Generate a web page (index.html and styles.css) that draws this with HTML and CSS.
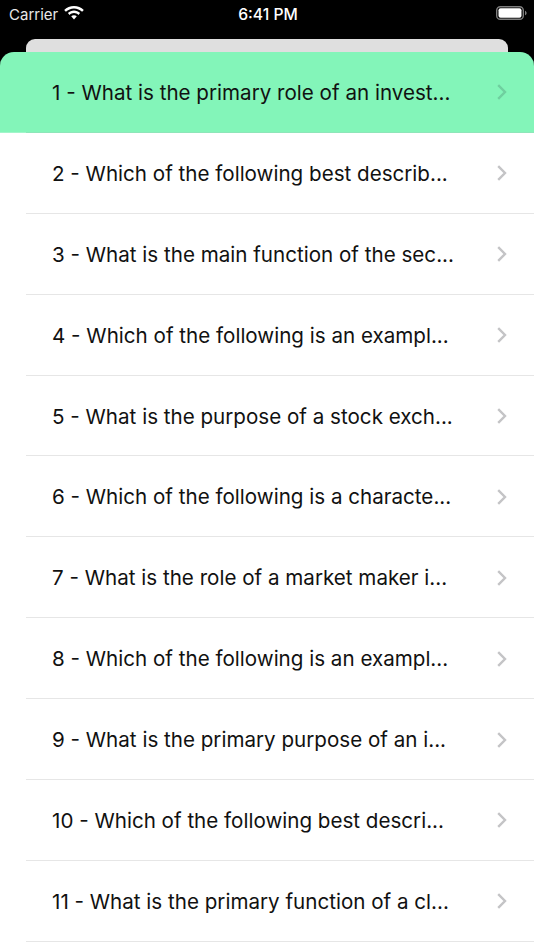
FILE: index.html
```html
<!DOCTYPE html>
<html lang="en">
<head>
    <meta charset="UTF-8">
    <meta name="viewport" content="width=device-width, initial-scale=1.0">
    <title>Questions</title>
    <link rel="stylesheet" href="styles.css">
</head>
<body>
    <!-- Status bar -->
    <div class="status-bar">
        <div class="status-left">
            <span class="carrier">Carrier</span>
            <svg class="wifi" width="20" height="14" viewBox="0 0 20 14">
                <path d="M10 0C6.200 0 2.700 1.500 .2 4L1.900 5.800C4 3.700 6.900 2.400 10 2.400S16 3.700 18.100 5.800L19.800 4C17.300 1.500 13.800 0 10 0Z" fill="#fff"/>
                <path d="M10 4.600C7.700 4.600 5.500 5.500 3.900 7.100L5.600 8.900C6.800 7.700 8.300 7 10 7S13.200 7.700 14.400 8.900L16.100 7.100C14.500 5.500 12.300 4.600 10 4.600Z" fill="#fff"/>
                <path d="M10 9.200C8.900 9.200 8 9.600 7.200 10.300L10 13.600 12.800 10.300C12 9.600 11.100 9.200 10 9.200Z" fill="#fff"/>
            </svg>
        </div>
        <span class="clock">6:41 PM</span>
        <svg class="battery" width="31" height="14" viewBox="0 0 31 14">
            <rect x="0.7" y="0.7" width="26.6" height="12.600" rx="3.600" fill="none" stroke="#7d7d7d" stroke-width="1.400"/>
            <rect x="2.500" y="2.200" width="23" height="9.600" rx="2" fill="#fff"/>
            <path d="M29 4.700v4.600c.9-.3 1.600-1.300 1.600-2.300S29.900 5 29 4.700z" fill="#7d7d7d"/>
        </svg>
    </div>

    <div class="back-card"></div>

    <!-- Question list -->
    <div class="list">
        <div class="row active"><span class="title">1 - What is the primary role of an invest...</span><svg class="chevron" width="12" height="18" viewBox="0 0 12 18"><path d="M2.200 2.200 9 9 2.200 15.800" /></svg></div>
        <div class="row"><span class="title">2 - Which of the following best describ...</span><svg class="chevron" width="12" height="18" viewBox="0 0 12 18"><path d="M2.200 2.200 9 9 2.200 15.800" /></svg></div>
        <div class="row"><span class="title">3 - What is the main function of the sec...</span><svg class="chevron" width="12" height="18" viewBox="0 0 12 18"><path d="M2.200 2.200 9 9 2.200 15.800" /></svg></div>
        <div class="row"><span class="title">4 - Which of the following is an exampl...</span><svg class="chevron" width="12" height="18" viewBox="0 0 12 18"><path d="M2.200 2.200 9 9 2.200 15.800" /></svg></div>
        <div class="row"><span class="title">5 - What is the purpose of a stock exch...</span><svg class="chevron" width="12" height="18" viewBox="0 0 12 18"><path d="M2.200 2.200 9 9 2.200 15.800" /></svg></div>
        <div class="row"><span class="title">6 - Which of the following is a characte...</span><svg class="chevron" width="12" height="18" viewBox="0 0 12 18"><path d="M2.200 2.200 9 9 2.200 15.800" /></svg></div>
        <div class="row"><span class="title">7 - What is the role of a market maker i...</span><svg class="chevron" width="12" height="18" viewBox="0 0 12 18"><path d="M2.200 2.200 9 9 2.200 15.800" /></svg></div>
        <div class="row"><span class="title">8 - Which of the following is an exampl...</span><svg class="chevron" width="12" height="18" viewBox="0 0 12 18"><path d="M2.200 2.200 9 9 2.200 15.800" /></svg></div>
        <div class="row"><span class="title">9 - What is the primary purpose of an i...</span><svg class="chevron" width="12" height="18" viewBox="0 0 12 18"><path d="M2.200 2.200 9 9 2.200 15.800" /></svg></div>
        <div class="row"><span class="title">10 - Which of the following best descri...</span><svg class="chevron" width="12" height="18" viewBox="0 0 12 18"><path d="M2.200 2.200 9 9 2.200 15.800" /></svg></div>
        <div class="row"><span class="title">11 - What is the primary function of a cl...</span><svg class="chevron" width="12" height="18" viewBox="0 0 12 18"><path d="M2.200 2.200 9 9 2.200 15.800" /></svg></div>
    </div>
</body>
</html>
```

FILE: styles.css
```css
/* Page */
html, body {
    height: 100%;
}

body {
    display: flex;
    flex-direction: column;
    margin: 0;
    overflow: hidden;
    background-color: #000;
    font-family: Inter, "Liberation Sans", sans-serif;
}

/* Status bar: three columns so the clock stays centred */
.status-bar {
    display: grid;
    grid-template-columns: 1fr auto 1fr;
    align-items: center;
    height: 26px;
    padding: 0 7px 2px 9px;
    margin-bottom: 11px;
    color: #fff;
}

.status-left {
    display: flex;
    align-items: center;
    gap: 6px;
}

.carrier {
    margin-top: 2px;
    color: #e8e8e8;
    font-size: 15px;
}

.clock {
    margin-top: 2px;
    font-weight: 500;
    font-size: 15.700px;
}

.battery {
    justify-self: end;
}

/* Card peeking out behind the sheet */
.back-card {
    flex-shrink: 0;
    height: 13px;
    margin: 0 26px;
    background-color: #dfdfdf;
    border-radius: 9px 9px 0 0;
}

/* Question list */
.list {
    flex: 1;
    display: flex;
    flex-direction: column;
    background: linear-gradient(transparent 81px, #fff 81px);
}

.row {
    display: flex;
    justify-content: space-between;
    align-items: center;
    flex-shrink: 0;
    box-sizing: border-box;
    height: 80.900px;
    padding: 0 26px 0 52px;
    background-color: #fff;
    position: relative;
}

/* Separator starts at the list inset, runs to the right edge */
.row::after {
    content: "";
    position: absolute;
    left: 26px;
    right: 0;
    bottom: 0;
    height: 1px;
    background-color: #e6e6e6;
}

.row.active {
    background-color: #83f5b9;
    border-radius: 14px 14px 0 0;
    box-shadow: inset 0 -1px 0 #a2f5ca;
}

.row.active::after {
    background-color: #8ee6b9;
}

.title {
    font-size: 20.600px;
    color: #111;
    white-space: nowrap;
}

.chevron {
    flex-shrink: 0;
    fill: none;
    stroke: #c4c4c6;
    stroke-width: 2.400;
}

.row.active .chevron {
    stroke: #6fcf9f;
}
```
